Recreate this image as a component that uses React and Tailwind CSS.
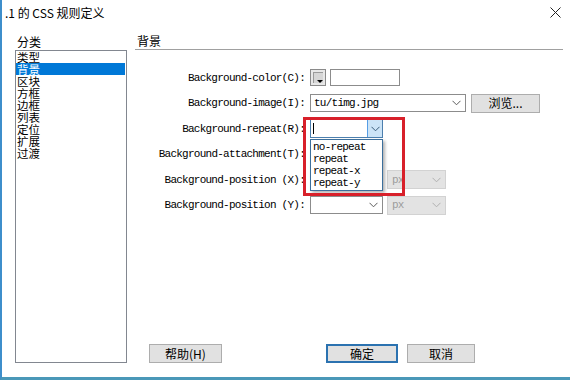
function Chevron({ color = "#5c5c5c" }) {
  return (
    <svg width="9" height="6" viewBox="0 0 9 6">
      <path d="M0.5 0.8 L4.5 4.8 L8.5 0.8" fill="none" stroke={color} strokeWidth="1" />
    </svg>
  );
}

function Combo({ w, text, children }) {
  return (
    <div className={`relative flex items-center h-[18px] border border-[#8c8c8c] bg-white ${w}`}>
      <span className="flex-1 pl-[3px] leading-[16px] whitespace-nowrap">{text}</span>
      <span className="w-[18px] flex items-center justify-center">
        <Chevron />
      </span>
      {children}
    </div>
  );
}

function Unit() {
  return (
    <div className="flex items-center h-[19px] w-[59px] border border-[#d2d2d2] bg-[#e3e3e3] text-[#9c9c9c]">
      <span className="flex-1 pl-[4px] leading-[16px]">px</span>
      <span className="w-[18px] flex items-center justify-center">
        <Chevron color="#b0b0b0" />
      </span>
    </div>
  );
}

function Label({ children }) {
  return <div className="flex items-center justify-end whitespace-nowrap">{children}</div>;
}

export default function App() {
  const cats = ["类型", "背景", "区块", "方框", "边框", "列表", "定位", "扩展", "过渡"];
  return (
    <div className="relative w-[570px] h-[380px] overflow-hidden bg-white border-l-2 border-b-[3px] border-l-[#3e8ecb] border-b-[#4a98b8] font-['Noto_Sans_CJK_SC',sans-serif] text-black flex flex-col">
      <div className="absolute left-[-2px] top-[9px] w-[2px] h-[12px] bg-[#c4343c]" />
      <div className="h-[25px] flex items-center justify-between pl-[3px] pr-[9px]">
        <span className="text-[12px] leading-[16px]">.1 的 CSS 规则定义</span>
        <svg width="11" height="11" viewBox="0 0 11 11">
          <path d="M0.5 0.5 L10.5 10.5 M10.5 0.5 L0.5 10.5" stroke="#222" strokeWidth="1" />
        </svg>
      </div>

      <div className="flex flex-1 pl-[13px] pb-[14px]">
        <div className="w-[112px] flex flex-col">
          <div className="h-[25px] flex items-end pl-[2px] text-[12px] leading-[16px]">分类</div>
          <div className="flex-1 border border-[#828790] bg-white pr-[1px]">
            {cats.map((c, i) => (
              <div
                key={c}
                className={`h-[12px] pl-[1px] text-[11.5px] leading-[12px] ${i === 1 ? "bg-[#0078d7] text-white" : ""}`}
              >
                {c}
              </div>
            ))}
          </div>
        </div>

        <div className="ml-[8px] mr-[7px] flex-1 flex flex-col">
          <div className="h-[25px] flex items-end pl-[2px] text-[12px] leading-[16px] border-b border-[#a0a0a0]">背景</div>

          <div className="mt-[15px] grid grid-cols-[170px_1fr] auto-rows-[25.5px] gap-x-[5px] font-['Liberation_Mono',monospace] text-[11px] tracking-[-0.75px]">
            <Label>Background-color(C):</Label>
            <div className="flex items-center gap-[4px]">
              <div className="relative w-[16px] h-[17px] border border-[#8a8a8a] bg-[#e8e8e8] p-[2px]">
                <div className="w-full h-full bg-[#d6d6d6] border-t border-l border-[#9a9a9a]" />
                <div className="absolute right-[2px] bottom-[2px] w-0 h-0 border-l-[3px] border-r-[3px] border-t-[3px] border-l-transparent border-r-transparent border-t-black" />
              </div>
              <div className="w-[70px] h-[17px] border border-[#8c8c8c] bg-white" />
            </div>

            <Label>Background-image(I):</Label>
            <div className="flex items-center gap-[5px]">
              <Combo w="w-[156px]" text="tu/timg.jpg" />
              <div className="w-[69px] h-[19px] flex items-center justify-center border border-[#adadad] bg-[#e1e1e1] font-['Noto_Sans_CJK_SC',sans-serif] text-[12px] tracking-normal leading-[16px]">
                浏览...
              </div>
            </div>

            <Label>Background-repeat(R):</Label>
            <div className="flex items-center">
              <div className="relative flex items-center w-[73px] h-[19px] border border-[#4c7fae] bg-white">
                <span className="flex-1 pl-[2px] flex items-center">
                  <span className="w-px h-[11px] bg-black" />
                </span>
                <span className="w-[15px] h-full flex items-center justify-center bg-[#cce4f7] border-l border-[#569de5]">
                  <Chevron color="#3a5c7a" />
                </span>
                <div className="absolute left-[-1px] top-[19px] z-10 w-[73px] border border-[#3c6f9c] bg-white py-[1px] shadow-[2px_2px_3px_rgba(0,0,0,0.3)]">
                  {["no-repeat", "repeat", "repeat-x", "repeat-y"].map((o) => (
                    <div key={o} className="h-[12px] pl-[2px] leading-[12px] whitespace-nowrap">{o}</div>
                  ))}
                </div>
                <div className="absolute left-[-8px] top-[-3px] z-20 w-[102px] h-[79px] border-[3px] border-[#d8202a]" />
              </div>
            </div>

            <Label>Background-attachment(T):</Label>
            <div className="flex items-center">
              <Combo w="w-[73px]" text="" />
            </div>

            <Label>Background-position (X):</Label>
            <div className="flex items-center gap-[4px]">
              <Combo w="w-[73px]" text="" />
              <Unit />
            </div>

            <Label>Background-position (Y):</Label>
            <div className="flex items-center gap-[4px]">
              <Combo w="w-[73px]" text="" />
              <Unit />
            </div>
          </div>

          <div className="flex-1" />
          <div className="flex h-[19px] text-[12px] leading-[16px]">
            <div className="ml-[14px] w-[73px] flex items-center justify-center border border-[#adadad] bg-[#e1e1e1]">帮助(H)</div>
            <div className="ml-[104px] w-[72px] flex items-center justify-center border-2 border-[#2b72b0] bg-[#e1e1e1]">确定</div>
            <div className="ml-[9px] w-[68px] flex items-center justify-center border border-[#adadad] bg-[#e1e1e1]">取消</div>
          </div>
        </div>
      </div>
    </div>
  );
}
